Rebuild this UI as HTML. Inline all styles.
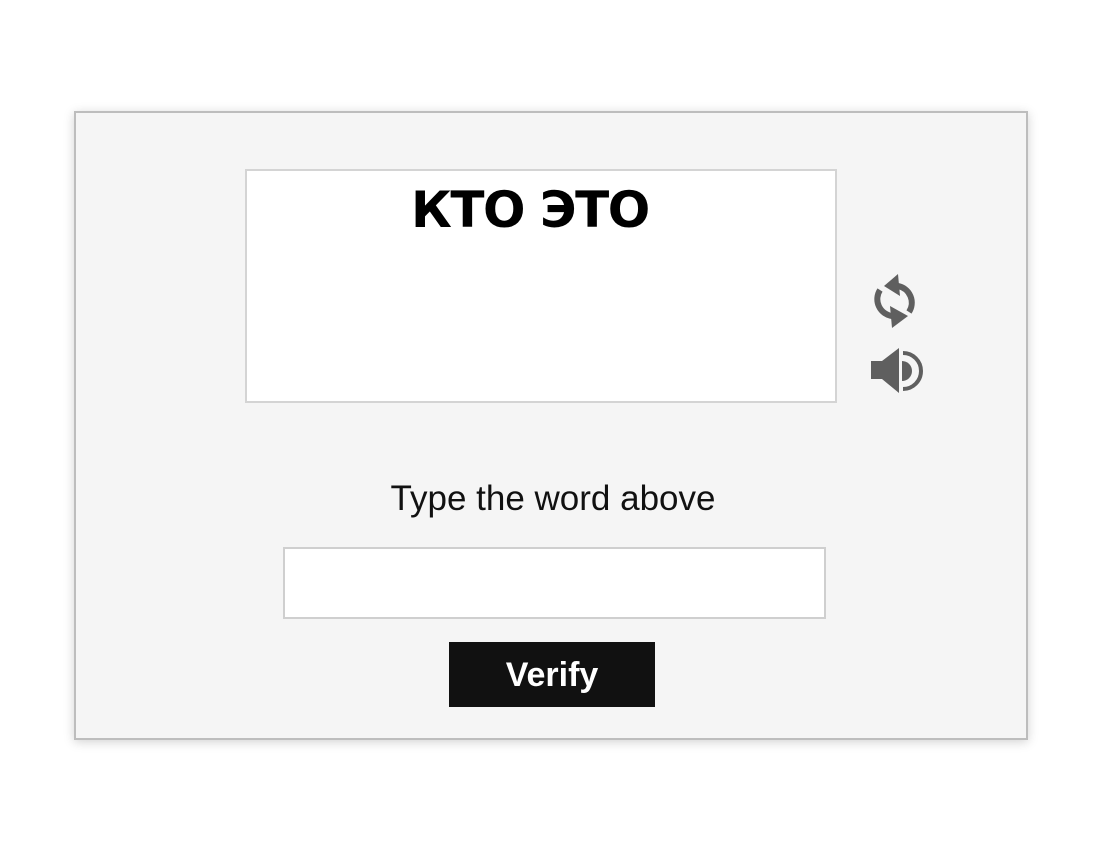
<!DOCTYPE html>
<html><head><style>
body{margin:0;width:1100px;height:852px;background:#fff;position:relative;font-family:"Liberation Sans",sans-serif;overflow:hidden}
.box{position:absolute;left:74px;top:111px;width:950px;height:625px;background:#f5f5f5;border:2px solid #bdbdbd;box-shadow:0 2px 10px rgba(0,0,0,.18)}
.cap{position:absolute;left:245px;top:169px;width:588px;height:230px;background:#fff;border:2px solid #d4d4d4}
.lbl{position:absolute;left:0;width:1106px;text-align:center;top:479px;font-size:35px;color:#111}
.inp{position:absolute;left:283px;top:547px;width:539px;height:68px;background:#fff;border:2px solid #cfcfcf}
.btn{position:absolute;left:449px;top:642px;width:206px;height:65px;background:#111;color:#fff;font-weight:bold;font-size:34px;text-align:center;line-height:67px}
</style></head><body>
<div class="box"></div>
<div class="cap"></div>
<div style="position:absolute;left:411px;top:181px;font:bold 50px 'DejaVu Sans',sans-serif;letter-spacing:-1.5px;white-space:nowrap">КТО ЭТО</div>
<svg style="position:absolute;left:868px;top:272px" width="60" height="130" viewBox="0 0 60 130">
<g fill="none" stroke="#5f5f5f" stroke-width="6">
<path d="M30 14 A17 17 0 0 1 41 40"/>
<path d="M24 44 A17 17 0 0 1 12 18"/>
</g>
<path fill="#5f5f5f" d="M16 14 L30 2 L32 24 Z"/>
<path fill="#5f5f5f" d="M40 44 L24 56 L22 34 Z"/>
<path fill="#5f5f5f" d="M3 89 H14 L31 76 V121 L14 107 H3 Z"/>
<path fill="#5f5f5f" d="M34 89 A10 10 0 0 1 34 109 Z"/>
<path fill="none" stroke="#5f5f5f" stroke-width="4" d="M35 81 A17 17 0 0 1 35 117"/>
</svg>
<div class="lbl">Type the word above</div>
<div class="inp"></div>
<div class="btn">Verify</div>
</body></html>
